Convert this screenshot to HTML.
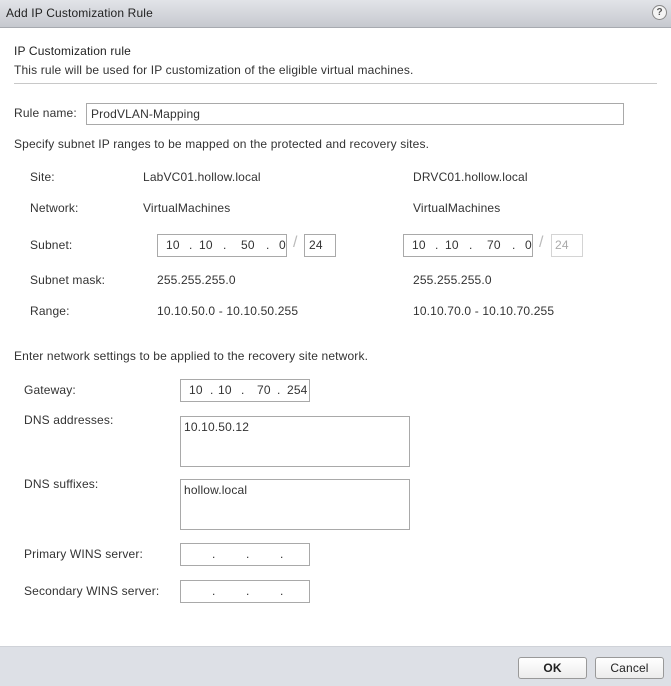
<!DOCTYPE html><html><head><style>
body{margin:0;width:671px;height:685px;position:relative;background:#fff;font-family:"Liberation Sans",sans-serif;font-size:12px;color:#333;overflow:hidden;letter-spacing:0.15px}
.a{position:absolute;white-space:nowrap;line-height:14px}
.b{position:absolute;border:1px solid #a9a9a9;background:#fff;box-sizing:border-box}
.ip{position:absolute;box-sizing:border-box;border:1px solid #a9a9a9;height:23px;line-height:21px;font-size:12px}
.ip span{position:absolute;top:0}
</style></head><body>
<div style="position:absolute;left:0;top:0;width:671px;height:27px;background:linear-gradient(#e2e4e8,#c6c9cf);border-bottom:1px solid #a7aab0"></div>
<div class="a" style="left:6px;top:6px;font-size:12px;color:#222">Add IP Customization Rule</div>
<div style="position:absolute;left:652px;top:5px;width:13px;height:13px;border:1px solid #888;border-radius:50%;background:#f4f4f4;font-size:10px;line-height:13px;text-align:center;color:#555;font-weight:bold;letter-spacing:0">?</div>
<div class="a" style="left:14px;top:44px;color:#222">IP Customization rule</div>
<div class="a" style="left:14px;top:63px">This rule will be used for IP customization of the eligible virtual machines.</div>
<div style="position:absolute;left:14px;top:83px;width:643px;height:1px;background:#c8c8c8"></div>
<div class="a" style="left:14px;top:106px">Rule name:</div>
<div class="b" style="left:86px;top:103px;width:538px;height:22px"></div>
<div class="a" style="left:91px;top:107px">ProdVLAN-Mapping</div>
<div class="a" style="left:14px;top:137px">Specify subnet IP ranges to be mapped on the protected and recovery sites.</div>
<div class="a" style="left:30px;top:170px">Site:</div><div class="a" style="left:143px;top:170px">LabVC01.hollow.local</div><div class="a" style="left:413px;top:170px">DRVC01.hollow.local</div>
<div class="a" style="left:30px;top:201px">Network:</div><div class="a" style="left:143px;top:201px">VirtualMachines</div><div class="a" style="left:413px;top:201px">VirtualMachines</div>
<div class="a" style="left:30px;top:238px">Subnet:</div>
<div class="ip" style="left:157px;top:234px;width:130px"><span style="left:8px">10</span><span style="left:31px">.</span><span style="left:41px">10</span><span style="left:65px">.</span><span style="left:83px">50</span><span style="left:108px">.</span><span style="left:121px">0</span></div>
<div class="a" style="left:293px;top:236px;color:#bbb;font-size:16px">/</div>
<div class="ip" style="left:304px;top:234px;width:32px"><span style="left:4px">24</span></div>
<div class="ip" style="left:403px;top:234px;width:130px"><span style="left:8px">10</span><span style="left:31px">.</span><span style="left:41px">10</span><span style="left:65px">.</span><span style="left:83px">70</span><span style="left:108px">.</span><span style="left:121px">0</span></div>
<div class="a" style="left:539px;top:236px;color:#bbb;font-size:16px">/</div>
<div class="ip" style="left:551px;top:234px;width:32px;border-color:#d4d4d4;color:#aaa"><span style="left:3px">24</span></div>
<div class="a" style="left:30px;top:273px">Subnet mask:</div><div class="a" style="left:157px;top:273px">255.255.255.0</div><div class="a" style="left:413px;top:273px">255.255.255.0</div>
<div class="a" style="left:30px;top:304px">Range:</div><div class="a" style="left:157px;top:304px">10.10.50.0 - 10.10.50.255</div><div class="a" style="left:413px;top:304px">10.10.70.0 - 10.10.70.255</div>
<div class="a" style="left:14px;top:349px">Enter network settings to be applied to the recovery site network.</div>
<div class="a" style="left:24px;top:383px">Gateway:</div>
<div class="ip" style="left:180px;top:379px;width:130px"><span style="left:8px">10</span><span style="left:29px">.</span><span style="left:37px">10</span><span style="left:60px">.</span><span style="left:76px">70</span><span style="left:96px">.</span><span style="left:106px">254</span></div>
<div class="a" style="left:24px;top:413px">DNS addresses:</div>
<div class="b" style="left:180px;top:416px;width:230px;height:51px"></div>
<div class="a" style="left:184px;top:420px">10.10.50.12</div>
<div class="a" style="left:24px;top:477px">DNS suffixes:</div>
<div class="b" style="left:180px;top:479px;width:230px;height:51px"></div>
<div class="a" style="left:184px;top:483px">hollow.local</div>
<div class="a" style="left:24px;top:547px">Primary WINS server:</div>
<div class="ip" style="left:180px;top:543px;width:130px"><span style="left:31px">.</span><span style="left:65px">.</span><span style="left:99px">.</span></div>
<div class="a" style="left:24px;top:584px">Secondary WINS server:</div>
<div class="ip" style="left:180px;top:580px;width:130px"><span style="left:31px">.</span><span style="left:65px">.</span><span style="left:99px">.</span></div>
<div style="position:absolute;left:0;top:646px;width:671px;height:39px;background:#dde0e6;border-top:1px solid #cfd2d8"></div>
<div style="position:absolute;left:518px;top:657px;width:69px;height:22px;box-sizing:border-box;border:1px solid #999;border-radius:3px;background:linear-gradient(#fff,#ececec);text-align:center;line-height:20px;font-weight:bold;color:#222">OK</div>
<div style="position:absolute;left:595px;top:657px;width:69px;height:22px;box-sizing:border-box;border:1px solid #999;border-radius:3px;background:linear-gradient(#fff,#ececec);text-align:center;line-height:20px;color:#222">Cancel</div>
</body></html>
